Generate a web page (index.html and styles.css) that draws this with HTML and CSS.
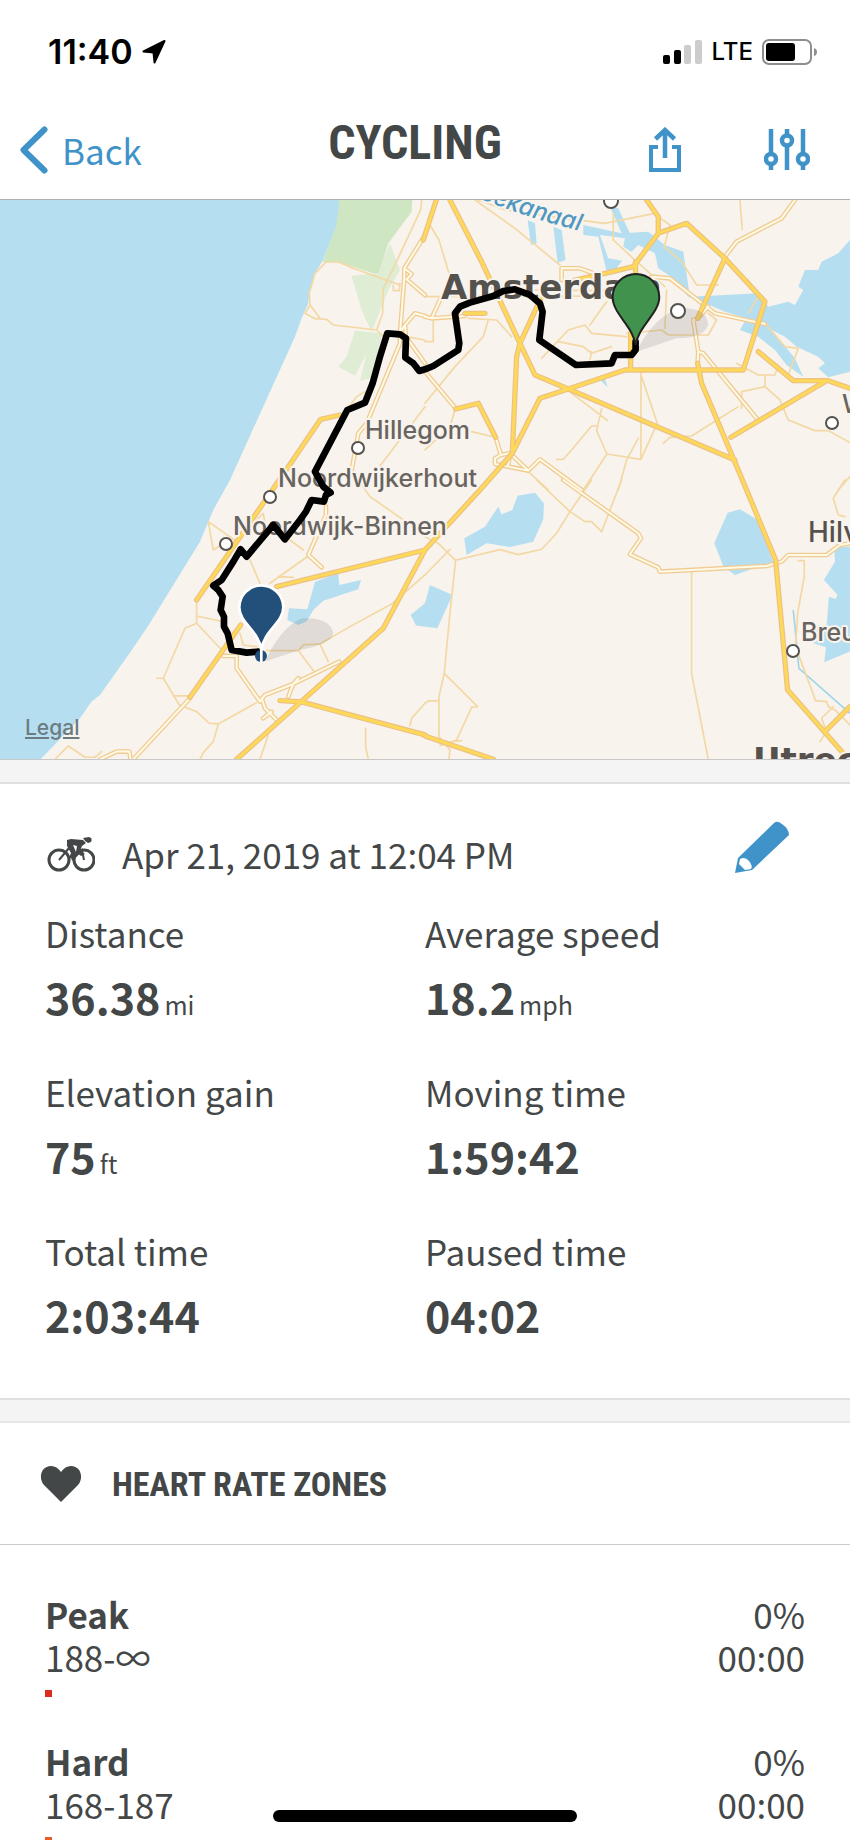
FILE: index.html
```html
<!DOCTYPE html>
<html lang="en">
<head>
    <meta charset="UTF-8">
    <meta name="viewport" content="width=device-width, initial-scale=1.0">
    <title>Cycling</title>
    <link rel="stylesheet" href="styles.css">
</head>
<body>
    <div class="status-bar">
        <div class="status-left">
            <span class="clock">11:40</span>
            <svg width="24" height="24" viewBox="0 0 24 24"><path d="M22.500 1 L12.500 22.500 L11.500 12.500 L1.500 11.500 Z" stroke="#000" stroke-width="2" stroke-linejoin="round"/></svg>
        </div>
        <div class="status-right">
            <svg width="40" height="26" viewBox="0 0 40 26">
                <rect x="0" y="16" width="7" height="9" rx="2"/>
                <rect x="11" y="11" width="7" height="14" rx="2"/>
                <rect x="21" y="6" width="7" height="19" rx="2" fill="#ccc"/>
                <rect x="32" y="1" width="7" height="24" rx="2" fill="#ccc"/>
            </svg>
            <span class="network">LTE</span>
            <svg width="56" height="26" viewBox="0 0 56 26">
                <rect x="1" y="1" width="48" height="24" rx="6" fill="none" stroke="#8e8e8e" stroke-width="2"/>
                <rect x="4" y="4" width="29" height="18" rx="3"/>
                <path d="M52 9 Q55 10 55 13 Q55 16 52 17 Z" fill="#8e8e8e"/>
            </svg>
        </div>
    </div>

    <header class="header">
        <button class="back">
            <svg width="28" height="48" viewBox="0 0 28 48"><path d="M24.500 3.500 L3.500 24 L24.500 44.500" fill="none" stroke="#3f93c8" stroke-width="6" stroke-linecap="round" stroke-linejoin="round"/></svg>
            <span>Back</span>
        </button>
        <h1>CYCLING</h1>
        <div class="actions">
            <button aria-label="Share">
                <svg width="32" height="46" viewBox="0 0 32 46" fill="none" stroke="#3f93c8" stroke-width="4">
                    <path d="M9 20 H2 V43 H30 V20 H23"/>
                    <path d="M16 31 V3 M6.500 12 L16 3 L25.500 12" stroke-width="4.500"/>
                </svg>
            </button>
            <button aria-label="Settings">
                <svg width="46" height="42" viewBox="0 0 46 42" fill="none" stroke="#3f93c8" stroke-width="4.500">
                    <path d="M7 0 V25 M7 35 V41 M23 0 V6 M23 17 V41 M39 0 V25 M39 35 V41"/>
                    <circle cx="7" cy="30" r="5"/>
                    <circle cx="23" cy="11.500" r="5"/>
                    <circle cx="39" cy="30" r="5"/>
                </svg>
            </button>
        </div>
    </header>

    <div class="map">
        <svg viewBox="0 0 850 559" role="img" aria-label="Route map">
            <defs>
                <!-- coordinates below are in thirds of a pixel -->
                <g id="minor">
                    <g transform="translate(0 -30)">
                        <path d="M1265 30 L1262 60 L1180 235 L1150 295 L1148 370 L1130 420 L1000 405 L980 388 L945 386 L915 370 L930 345 L928 310 L945 250 L978 216 L1015 216 L1060 235 L1200 285 M930 345 L960 385 M1130 420 L1150 440 M1180 285 L1180 302 L1198 302 L1200 280 M1220 440 L1275 450 M1275 650 L1140 828 M1040 660 L1070 620 L1095 605"/>
                    </g>
                    <g transform="translate(1275 -30)">
                        <path d="M15 105 L42 150 L75 260 L60 330 M150 30 L270 115 L405 225 M160 30 L240 60 L380 80 L540 100 L690 70 M275 30 L255 60 M565 70 L565 150 L630 210 L720 290 M700 80 L735 105 L718 170 L770 215 L815 285 L880 285 M945 30 L952 118 M970 370 L1000 320 L970 270 M0 455 L25 455 L25 390 M0 320 L560 318 M300 300 L560 302 M545 335 L495 405 M190 390 L175 440 L90 530 L0 640 M130 385 L215 390 L260 440 M350 505 L430 420 L480 405 L500 430 L605 440 M400 455 L475 470 L500 490 L560 470 M495 510 L500 485 M605 430 L710 420 L730 435 L850 435 L875 390 L850 370 M720 415 L725 300 M648 540 L648 808 L546 792 L515 722 L530 655 M650 560 L697 700 L648 808 M440 610 L500 655 L548 692 M515 708 L500 708 L440 780 L415 808 L395 808 M546 792 L475 900 M640 745 L605 810 L580 900 M715 760 L735 742 L800 738 L940 650 M935 520 L1000 555 L1050 555 L1060 525 M1020 555 L1020 590 L950 605 L950 655 M1020 590 L1065 630 L1090 690 L1170 722 L1210 722 L1275 758 M1025 405 L1080 470 L1120 475 L1090 555 M0 780 L75 710 L90 660 M140 725 L210 742 M310 845 L370 900 M1240 900 L1275 860"/>
                    </g>
                    <g transform="translate(0 840)">
                        <path d="M1075 0 L1110 50 L1225 130 L1275 150 M625 125 L640 210 L670 190 M625 125 L710 185 M770 120 L790 100 L795 130 M750 240 L780 310 M925 228 L810 310 M870 180 L910 210 M835 290 L880 292 M590 365 L590 430 L660 505 M590 408 L660 423 M590 430 L555 445 L490 595 L470 595 M490 595 L538 675 L590 695 L628 730 L655 732 L770 668 M655 732 L640 785 L610 818 L600 838 M520 648 L570 648 M720 460 L730 495 L770 500 M800 512 L895 512 L910 495 L960 492 L1050 440 L1175 372 L1275 285 M895 512 L940 572 M960 492 L985 545 M805 765 L780 838 M1275 670 L1235 715 L1230 738 M1097 745 L1097 800 L1105 838 M165 838 L205 798 L255 832 L285 832 L305 815"/>
                    </g>
                    <g transform="translate(1275 840)">
                        <path d="M335 0 L435 95 L480 125 L500 125 L530 155 L590 0 M500 0 L435 95 L395 160 L350 208 L280 224 L225 209 L92 241 L40 190 L0 170 M0 285 L75 208 M92 241 L75 400 L58 580 L42 650 L42 770 L75 810 L72 838 M58 580 L158 680 L140 682 L95 780 L45 797 M0 670 L10 663 L42 663 M110 782 L80 785 M800 275 L800 580 L850 838 M1260 0 L1225 55 L1240 105 L1260 110 M1120 242 L1138 242 L1138 290 L1118 400 L1112 500 L1172 662 L1205 665 L1210 680 L1230 690 L1275 735 M1225 680 L1190 715 L1205 755 L1185 785"/>
                    </g>
                </g>
                <g id="secondary">
                    <g transform="translate(0 -30)">
                        <path d="M1275 135 L1213 235 L1213 265 L1200 430 L1200 460 L1100 700 L1075 730 L1070 760 L1055 840 M1213 235 L1235 252 L1220 268 L1275 315 M1205 420 L1215 405 L1245 370 L1275 378 M1215 405 L1218 440 L1275 520"/>
                    </g>
                    <g transform="translate(1275 -30)">
                        <path d="M0 380 L20 385 L120 378 M20 385 L45 330 M410 270 L410 235 L465 235 L520 255 M680 260 L735 265 L870 370 L1020 402 M1110 30 L1070 85 L935 155 L900 200 M820 385 L805 390 L820 485 L818 520 M820 485 L835 490 L995 685 M850 350 L820 385 M0 545 L92 655 M212 742 L228 795 L210 805 L210 822 L250 830 L310 842 L345 808 L470 900 M228 795 L255 790 L310 842 M255 795 L250 825"/>
                    </g>
                    <g transform="translate(0 840)">
                        <path d="M978 80 L978 105 L925 225 L965 262 M670 528 L710 528 L710 565 L780 665 L795 645 L880 612 L1018 545 M865 650 L880 612 L895 595 M785 655 L795 685 L830 720 M790 715 L815 695 M570 655 L400 838 M300 838 L350 815 L388 815 L392 838"/>
                    </g>
                    <g transform="translate(1275 840)">
                        <path d="M415 0 L640 160 L648 175 L615 223 L700 262 L705 275 L1025 258 L1070 245 L1090 225 L1205 225 L1245 195 L1275 190"/>
                    </g>
                </g>
                <g id="highway">
                    <g transform="translate(0 -30)">
                        <path d="M1309 30 L1270 150 M1020 675 L962 688 L860 838 L590 1230 M830 1190 L1275 1080 M1275 1080 L1150 1315 L710 1708 M722 1305 L570 1522 M840 1532 L905 1536 L1275 1635"/>
                    </g>
                    <g transform="translate(1275 -30)">
                        <path d="M75 30 L170 215 L285 460 L330 555 L430 597 L930 810 M350 320 L285 460 L275 500 L262 790 M550 248 L625 230 L700 130 L700 80 L665 30 M700 130 L785 100 L900 205 L1020 335 L955 540 L600 540 L430 597 L345 625 L262 790 L165 900 L0 1080 M632 215 L632 300 M617 430 L617 540 M430 275 L550 248 M900 205 L818 385 M120 370 L180 370 M92 657 L160 640 L212 742 M818 520 L830 580 L925 805 L965 900 L1052 1110 L1088 1500 L1255 1690 M1000 485 L1105 572 L1210 572 L1275 595 M1200 575 L918 742 M1275 1550 L1200 1625 M0 1638 L205 1708"/>
                    </g>
                </g>
            </defs>

            <g transform="scale(.3333)">
                <g class="parks" transform="translate(0 -30)">
                    <path d="M1018 30 L1237 30 L1235 65 L1165 160 L1135 255 L1015 216 L968 216 L1005 115 Z"/>
                    <path class="light" d="M1170 160 L1200 240 L1165 300 L1115 425 L1085 360 L1055 258 L1135 248 Z M1065 422 L1145 430 L1125 560 L1080 573 L1100 490 L1065 557 L1015 530 L1040 500 Z"/>
                </g>
                <g class="water">
                    <path transform="translate(0 -30)" d="M0 30 H1018 L1015 60 L1008 110 L985 170 L968 212 L945 250 L928 310 L925 340 L905 385 L885 440 L690 870 L640 960 L600 1055 L440 1315 L385 1395 L300 1515 L275 1535 L240 1585 L120 1710 H0 Z"/>
                    <g transform="translate(1275 -30)">
                        <path d="M308 90 L330 100 L335 160 L318 165 Z M385 110 L410 120 L422 210 L398 218 Z M475 105 L590 130 L670 125 L720 165 L775 185 L795 320 L900 315 L1005 310 L1030 350 L1090 335 L1110 345 L1135 300 L1120 290 L1140 240 L1180 240 L1190 215 L1240 190 L1275 150 V545 L1210 562 L1180 535 L1200 520 L1180 500 L1115 470 L1080 440 L1040 420 L1110 505 L1135 560 L1085 525 L1050 480 L1000 440 L945 420 L965 385 L900 365 L830 335 L790 320 L745 265 L700 235 L690 190 L640 165 L620 185 L595 170 L600 145 L525 135 L550 205 L592 212 L570 240 L545 245 L520 140 L475 135 Z M555 50 L580 55 L615 130 L590 130 Z M525 570 L540 565 L548 592 Z"/>
                    </g>
                    <path transform="translate(0 840)" d="M945 305 L1015 280 L1018 315 L1083 300 L1075 328 L970 362 L940 390 L920 425 L895 435 L862 420 L867 385 L922 388 Z M1232 405 L1275 370 L1290 315 L1358 345 L1312 445 L1248 437 Z"/>
                    <path transform="translate(1275 840)" d="M118 175 L180 140 L220 80 L230 103 L262 90 L278 47 L330 38 L357 70 L355 118 L325 185 L255 201 L185 190 L125 225 Z M908 98 L945 88 L995 118 L1045 245 L930 285 L895 258 L868 190 Z M1275 200 L1228 200 L1230 245 L1197 300 L1238 345 L1232 357 L1212 350 L1205 435 L1172 435 L1165 490 L1203 502 L1198 547 L1275 515 Z"/>
                    <path class="stream" transform="translate(1275 840)" d="M1105 390 L1122 565 L1275 700"/>
                </g>
                <use href="#minor" class="minor"/>
                <use href="#secondary" class="secondary-edge"/>
                <use href="#secondary" class="secondary-fill"/>
                <use href="#highway" class="highway-edge"/>
                <use href="#highway" class="highway-fill"/>
                <path class="shadow" d="M1910 455 Q1960 350 2040 325 Q2120 320 2125 375 Q2110 415 2030 415 Z M795 1385 Q840 1285 905 1255 Q990 1250 1000 1300 Q990 1335 900 1350 Z"/>
            </g>

            <g class="labels">
                <path id="canal" d="M430 -25 Q490 8 580 31" fill="none"/>
                <text class="canal"><textPath href="#canal" startOffset="100%" text-anchor="end">Noordzeekanaal</textPath></text>
                <text class="city" x="441" y="99">Amsterdam</text>
                <text x="365" y="239">Hillegom</text>
                <text x="278" y="287">Noordwijkerhout</text>
                <text x="233" y="335">Noordwijk-Binnen</text>
                <text x="842" y="213">Weesp</text>
                <text class="big" x="808" y="342">Hilversum</text>
                <text x="801" y="441">Breukelen</text>
                <text class="city" x="753" y="572">Utrecht</text>
                <circle cx="358" cy="248" r="6"/>
                <circle cx="270" cy="297" r="6"/>
                <circle cx="226" cy="344" r="6"/>
                <circle cx="611" cy="1" r="7"/>
                <circle cx="678" cy="111" r="7"/>
                <circle cx="832" cy="223" r="6"/>
                <circle cx="793" cy="451" r="6"/>
            </g>

            <g transform="scale(.3333)">
                <path class="route" transform="translate(0 -30)" d="M775 1385 L740 1388 L695 1380 L683 1330 L672 1310 L672 1280 L662 1260 L668 1220 L655 1200 L640 1187 L665 1170 L700 1115 L722 1078 L740 1100 L820 1005 L855 1048 L900 990 L918 965 L935 930 L972 935 L978 915 L992 908 L970 890 L945 845 L1042 660 L1095 638 L1118 580 L1140 500 L1162 430 L1200 433 L1218 445 L1216 503 L1240 520 L1258 543 L1275 538 L1300 528 L1375 480 L1378 460 L1365 370 L1380 350 L1410 338 L1480 318 L1510 303 L1545 298 L1590 315 L1620 340 L1628 365 L1618 450 L1728 525 L1835 520 L1845 495 L1895 495 L1907 480 L1907 455"/>
                <path class="pin-start" d="M1907 435 C1900 380 1838 340 1838 292 A70 70 0 0 1 1978 292 C1978 340 1914 380 1907 435 Z"/>
                <circle cx="783" cy="1368" r="18" fill="#22507a"/>
                <path d="M784 1340 V1390" stroke="#fff" stroke-width="8"/>
                <path class="pin-end" d="M784 1350 C776 1290 718 1270 718 1222 A66 66 0 0 1 850 1222 C850 1270 792 1290 784 1350 Z"/>
            </g>
        </svg>
        <a class="legal" href="#">Legal</a>
    </div>

    <section class="summary">
        <div class="summary-head">
            <svg class="bike" width="50" height="36" viewBox="0 0 50 36">
                <g fill="none" stroke="#444747" stroke-width="3">
                    <circle cx="14" cy="24" r="10"/>
                    <circle cx="39" cy="24" r="10"/>
                    <path d="M14 24 L24 12 M27 24 L37 14 L39 24" stroke-width="2"/>
                </g>
                <path d="M22 4 L26 3 L38 4 L41 7 L37 10 L35 15 L40 18 L36 20 L31 16 L32 10 L28 9 L31 16 L28 23 L24 22 L26 17 L22 10 Z" fill="#444747"/>
                <path d="M38 2 L44 1 Q48 2 46 6 L43 7 Q40 6 38 2 Z" fill="#444747"/>
            </svg>
            <span class="date">Apr 21, 2019 at 12:04 PM</span>
            <button class="edit" aria-label="Edit">
                <svg width="54" height="52" viewBox="0 0 54 52">
                    <path d="M0 52 L3 37 L39 2 Q42 -1 47 3 Q54 8 54 14 L17 49 Z" fill="#3f93c8"/>
                    <path d="M5 38 Q10 35 14 40 Q18 45 16 48 L10 49 L4 43 Z" fill="#fff"/>
                </svg>
            </button>
        </div>
        <dl class="stats">
            <div><dt>Distance</dt><dd>36.38<small>mi</small></dd></div>
            <div><dt>Average speed</dt><dd>18.2<small>mph</small></dd></div>
            <div><dt>Elevation gain</dt><dd>75<small>ft</small></dd></div>
            <div><dt>Moving time</dt><dd>1:59:42</dd></div>
            <div><dt>Total time</dt><dd>2:03:44</dd></div>
            <div><dt>Paused time</dt><dd>04:02</dd></div>
        </dl>
    </section>

    <section class="zones">
        <div class="zones-head">
            <svg width="42" height="38" viewBox="0 0 42 38"><path d="M21 37 L4 20 C-2 13 1 1 11 1 Q17 1 21 7 Q25 1 31 1 C41 1 44 13 38 20 Z" fill="#444747"/></svg>
            <h2>HEART RATE ZONES</h2>
        </div>
        <div class="zone">
            <div class="zone-row"><strong>Peak</strong><span>0%</span></div>
            <div class="zone-row"><span>188-∞</span><span>00:00</span></div>
            <div class="bar peak"></div>
        </div>
        <div class="zone">
            <div class="zone-row"><strong>Hard</strong><span>0%</span></div>
            <div class="zone-row"><span>168-187</span><span>00:00</span></div>
            <div class="bar hard"></div>
        </div>
    </section>

    <div class="home-indicator"></div>
</body>
</html>
```

FILE: styles.css
```css
* {
    box-sizing: border-box;
}

body {
    margin: 0;
    height: 100vh;
    overflow: hidden;
    background-color: #fff;
    color: #444747;
    font-family: 'Noto Sans CJK SC', 'Noto Sans', sans-serif;
    font-size: 35px;
    line-height: 48px;
}

svg {
    display: block;
}

button {
    display: flex;
    align-items: center;
    border: none;
    background: none;
    padding: 0;
    font: inherit;
    color: #3f93c8;
    cursor: pointer;
}

/* Status bar */
.status-bar {
    display: flex;
    justify-content: space-between;
    align-items: center;
    height: 104px;
    padding: 0 32px 0 48px;
    color: #000;
    font-family: Inter, sans-serif;
}

.status-left,
.status-right {
    display: flex;
    align-items: center;
    gap: 9px;
}

.clock {
    font-size: 34px;
    font-weight: 600;
}

.network {
    font-size: 24px;
    font-weight: 500;
}

/* Header */
.header {
    display: grid;
    grid-template-columns: 1fr auto 1fr;
    align-items: center;
    height: 96px;
    padding: 0 40px 4px 20px;
    border-bottom: 1px solid #b0b0b0;
}

.back {
    gap: 14px;
}

.header h1 {
    margin: 0 0 14px;
    font-family: 'Roboto Condensed', Roboto, sans-serif;
    font-size: 48px;
    font-weight: 700;
}

.actions {
    display: flex;
    justify-content: flex-end;
    align-items: center;
    gap: 83px;
}

/* Map */
.map {
    position: relative;
    border-bottom: 1px solid #c8c8c8;
    background-color: #f8f3ed;
}

.map svg {
    width: 100%;
}

.parks { fill: #cfe6c3; }
.parks .light { fill: #deedd4; }
.water { fill: #b5dff1; }

.stream {
    fill: none;
    stroke: #a3d5ea;
    stroke-width: 5;
}

.minor,
.secondary-edge,
.secondary-fill,
.highway-edge,
.highway-fill,
.route {
    fill: none;
    stroke-linejoin: round;
    stroke-linecap: round;
}

.minor { stroke: #f3d8a3; stroke-width: 5; }
.secondary-edge { stroke: #f0cc95; stroke-width: 14; }
.secondary-fill { stroke: #fffae5; stroke-width: 6; }
.highway-edge { stroke: #ecc088; stroke-width: 16; }
.highway-fill { stroke: #fdd957; stroke-width: 9; }
.route { stroke: #000; stroke-width: 20; }

.shadow {
    fill: #555;
    opacity: 0.15;
}

.labels text {
    fill: #68645f;
    stroke: #f8f3ed;
    stroke-width: 4px;
    stroke-linejoin: round;
    paint-order: stroke;
    font-family: Inter, sans-serif;
    font-size: 25px;
    font-weight: 500;
}

.labels .big {
    font-size: 28px;
    fill: #55524e;
}

.labels .city {
    font-family: 'DejaVu Sans', sans-serif;
    font-size: 34px;
    font-weight: 700;
    fill: #55524e;
}

.labels .canal {
    fill: #4f98c2;
    font-size: 24px;
    font-style: italic;
}

.labels circle {
    fill: #fff;
    stroke: #55524e;
    stroke-width: 2;
}

.pin-start {
    fill: #41924d;
    stroke: #222;
    stroke-width: 6;
}

.pin-end {
    fill: #22507a;
    stroke: #fff;
    stroke-width: 8;
}

.legal {
    position: absolute;
    left: 25px;
    bottom: 16px;
    color: #6c7b80;
    font-family: Inter, sans-serif;
    font-size: 21px;
    font-weight: 500;
    line-height: 30px;
}

/* Summary */
.summary {
    margin-top: 22px;
    padding: 46px 45px 52px;
    border-top: 2px solid #e0e0e0;
    border-bottom: 2px solid #e0e0e0;
    background-color: #fff;
    box-shadow: 0 -22px 0 #f4f4f4, 0 22px 0 #f4f4f4;
}

.summary-head {
    display: flex;
    align-items: center;
    height: 48px;
    margin-bottom: 31px;
}

.date {
    margin-left: 27px;
}

.edit {
    margin: 0 16px 14px auto;
}

.stats {
    display: grid;
    grid-template-columns: 1fr 1fr;
    row-gap: 40px;
    margin: 0;
}

.stats dd {
    margin: 7px 0 0;
    font-size: 43px;
    font-weight: 700;
    line-height: 64px;
}

.stats small {
    margin-left: 4px;
    font-size: 25px;
    font-weight: 400;
    line-height: 1;
}

/* Heart rate zones */
.zones {
    margin-top: 21px;
    border-top: 2px solid #e6e6e6;
    background-color: #fff;
    position: relative;
}

.zones-head {
    display: flex;
    align-items: center;
    gap: 30px;
    height: 122px;
    margin-bottom: 47px;
    padding: 0 40px;
    border-bottom: 1px solid #ccc;
}

.zones h2 {
    margin: 0;
    font-family: 'Roboto Condensed', Roboto, sans-serif;
    font-size: 34px;
    font-weight: 700;
}

.zone {
    margin-bottom: 42px;
    padding: 0 45px;
}

.zone-row {
    display: flex;
    justify-content: space-between;
    line-height: 43px;
}

.bar {
    width: 7px;
    height: 7px;
    margin-top: 12px;
}

.peak { background-color: #dd2c1e; }
.hard { background-color: #ea5b28; }

.home-indicator {
    position: fixed;
    left: 50%;
    bottom: 18px;
    width: 304px;
    height: 12px;
    margin-left: -152px;
    border-radius: 6px;
    background-color: #000;
}
```
